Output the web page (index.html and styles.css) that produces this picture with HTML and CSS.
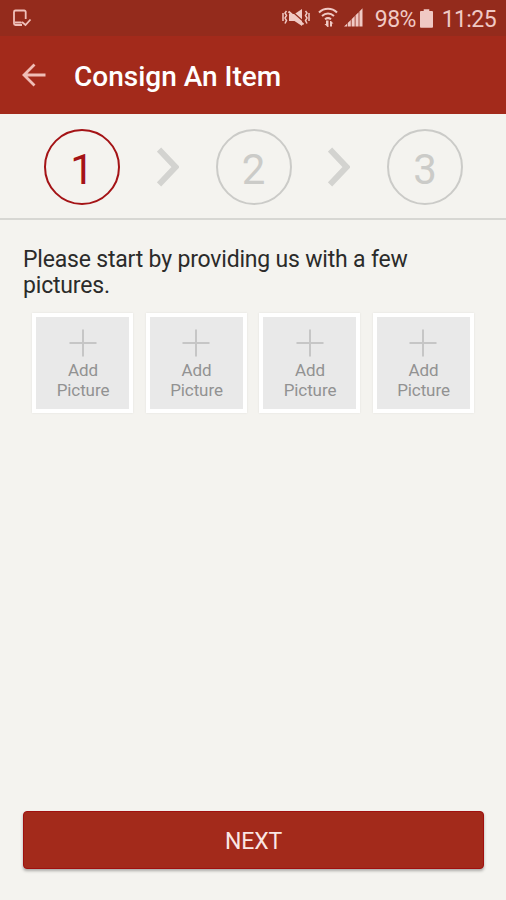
FILE: index.html
```html
<!DOCTYPE html>
<html lang="en">

<head>
    <meta charset="UTF-8">
    <meta name="viewport" content="width=device-width, initial-scale=1.0">
    <title>Consign An Item</title>
    <link rel="stylesheet" href="styles.css">
</head>

<body>
    <div class="status-bar">
        <svg class="device-icon" width="20" height="20" viewBox="0 0 20 20">
            <path d="M13.700 11V4a1.500 1.500 0 0 0-1.500-1.500H3.500A1.500 1.500 0 0 0 2 4v11.500A1.500 1.500 0 0 0 3.500 17h6.500M3 14.500h6.500M10 14l3.500 3 5-5.500" />
        </svg>
        <div class="status-right">
            <svg class="mute-icon" width="28" height="20" viewBox="0 0 28 20">
                <path class="fill" d="M7 6h5.500L20 1v17l-7.500-5H7z" />
                <path class="cut" d="M8.500 2l13 11.500" />
                <path class="line" d="M6.500 3.500l15 13" />
                <path class="wave" d="M4.500 3L3 5l1.500 2.500L3 10l1.500 2.500L3 15.500M1 5v8M23.500 3L25 5l-1.500 2.500L25 10l-1.500 2.500 1.500 3M27 5v8" />
            </svg>
            <svg class="wifi-icon" width="20" height="22" viewBox="0 0 20 22">
                <path class="line" d="M1 5.500c5-5 13-5 18 0M4 9c3.500-3.300 8.500-3.300 12 0M7 12.300c2-1.600 4-1.600 6 0" />
                <path class="fill" d="M8 13.500h2.500v6.500H9.500L6.500 17H8zM12 19.500V14h1l2.500 2.500H14v3z" />
            </svg>
            <svg class="signal-icon" width="19" height="20" viewBox="0 0 19 20">
                <path class="fill" d="M0 18.500l3-2.800v2.800zM3.700 15l3.100-3v6.500H3.700zM7.600 11.200l3.100-3.100v10.400H7.600zM11.500 7.300l3.100-3.100v14.300h-3.100zM15.400 3.400L18.500 0.300v18.200h-3.100z" />
            </svg>
            <span class="battery-text">98%</span>
            <svg class="battery-icon" width="13" height="19" viewBox="0 0 14 20">
                <path class="fill" d="M4 0h6v2h3a1 1 0 0 1 1 1V19a1 1 0 0 1-1 1H1a1 1 0 0 1-1-1V3a1 1 0 0 1 1-1h3z" />
            </svg>
            <span class="clock">11:25</span>
        </div>
    </div>

    <header class="header">
        <svg class="back-icon" width="24" height="24" viewBox="0 0 24 24">
            <path d="M12.500 1.500L2 12l10.500 10.500M2 12h21.500" />
        </svg>
        <h1 class="title">Consign An Item</h1>
    </header>

    <div class="steps">
        <div class="step active">1</div>
        <svg class="chevron" width="22" height="40" viewBox="0 0 22 40">
            <path d="M2 2.500l16.500 17.500L2 37.500" />
        </svg>
        <div class="step">2</div>
        <svg class="chevron" width="22" height="40" viewBox="0 0 22 40">
            <path d="M2 2.500l16.500 17.500L2 37.500" />
        </svg>
        <div class="step">3</div>
    </div>

    <main class="content">
        <p class="intro">Please start by providing us with a few pictures.</p>
        <div class="pictures">
            <div class="picture">
                <svg class="plus" width="28" height="28" viewBox="0 0 28 28"><path d="M14 0.500v27M0.500 14h27" /></svg>
                <span>Add<br>Picture</span>
            </div>
            <div class="picture">
                <svg class="plus" width="28" height="28" viewBox="0 0 28 28"><path d="M14 0.500v27M0.500 14h27" /></svg>
                <span>Add<br>Picture</span>
            </div>
            <div class="picture">
                <svg class="plus" width="28" height="28" viewBox="0 0 28 28"><path d="M14 0.500v27M0.500 14h27" /></svg>
                <span>Add<br>Picture</span>
            </div>
            <div class="picture">
                <svg class="plus" width="28" height="28" viewBox="0 0 28 28"><path d="M14 0.500v27M0.500 14h27" /></svg>
                <span>Add<br>Picture</span>
            </div>
        </div>
    </main>

    <button class="next-button">NEXT</button>
</body>

</html>
```
FILE: styles.css
```css
* {
    box-sizing: border-box;
}

body {
    margin: 0;
    height: 900px;
    display: flex;
    flex-direction: column;
    overflow: hidden;
    background-color: #f4f3ef;
    font-family: Roboto, sans-serif;
}

svg {
    display: block;
    flex-shrink: 0;
    fill: none;
}

.status-bar {
    height: 36px;
    padding: 0 10px 0 12px;
    display: flex;
    align-items: center;
    justify-content: space-between;
    background-color: #942b1c;
    color: #f0c9c4;
    font-size: 23px;
    letter-spacing: -0.6px;
}

.status-right {
    display: flex;
    align-items: center;
}

.status-right span {
    padding-top: 2px;
}

.status-bar .fill {
    fill: #f0c9c4;
}

.status-bar .line {
    stroke: #f0c9c4;
    stroke-width: 2;
}

.status-bar .wave {
    stroke: #f0c9c4;
    stroke-width: 1.5;
}

.status-bar .cut {
    stroke: #942b1c;
    stroke-width: 1.2;
}

.device-icon {
    stroke: #f0c0ba;
    stroke-width: 1.8;
}

.wifi-icon {
    margin-left: 8px;
}

.signal-icon {
    margin-left: 6px;
}

.battery-text {
    margin-left: 12px;
}

.battery-icon {
    margin-left: 4px;
}

.clock {
    margin-left: 9px;
}

.header {
    height: 78px;
    padding: 0 22px;
    display: flex;
    align-items: center;
    background-color: #a32a1b;
}

.back-icon {
    stroke: #f0bdb6;
    stroke-width: 2.8;
}

.title {
    margin: 3px 0 0 28px;
    color: white;
    font-size: 28px;
    font-weight: 500;
}

.steps {
    height: 106px;
    padding: 2px 43px 0 44px;
    display: flex;
    align-items: center;
    justify-content: space-between;
    border-bottom: 2px solid #d7d7d3;
}

.step {
    width: 76px;
    height: 76px;
    display: flex;
    align-items: center;
    justify-content: center;
    padding-top: 4px;
    border: 2px solid #cbcbc8;
    border-radius: 50%;
    color: #cbcbc8;
    font-size: 42px;
}

.step.active {
    border-color: #a41316;
    color: #a41316;
}

.chevron {
    stroke: #d3d3d0;
    stroke-width: 6;
}

.content {
    flex: 1;
    padding: 27px 23px 0;
}

.intro {
    margin: 0;
    color: #2b2b2a;
    font-size: 23px;
    line-height: 26px;
    letter-spacing: -0.19px;
}

.pictures {
    margin: 14px 9px 0;
    display: flex;
    gap: 12.500px;
}

.picture {
    width: 101px;
    height: 100px;
    padding-top: 12px;
    display: flex;
    flex-direction: column;
    align-items: center;
    background-color: #e9e9e9;
    border: 4px solid white;
    box-shadow: 0 0 2px rgba(0, 0, 0, 0.08);
    color: #929292;
    font-size: 17px;
    line-height: 20px;
    text-align: center;
}

.picture span {
    padding-left: 1px;
    letter-spacing: -0.1px;
}

.plus {
    margin-bottom: 3px;
    stroke: #c6c6c6;
    stroke-width: 2;
}

.next-button {
    height: 58px;
    margin: 0 22px 31px 23px;
    padding: 2px 0 0;
    background-color: #a32a1b;
    border: 1px solid #a0100f;
    border-radius: 4px;
    box-shadow: 0 2px 3px rgba(0, 0, 0, 0.3);
    color: #fbe6e4;
    font-family: inherit;
    font-size: 23px;
    letter-spacing: -0.2px;
}
```
